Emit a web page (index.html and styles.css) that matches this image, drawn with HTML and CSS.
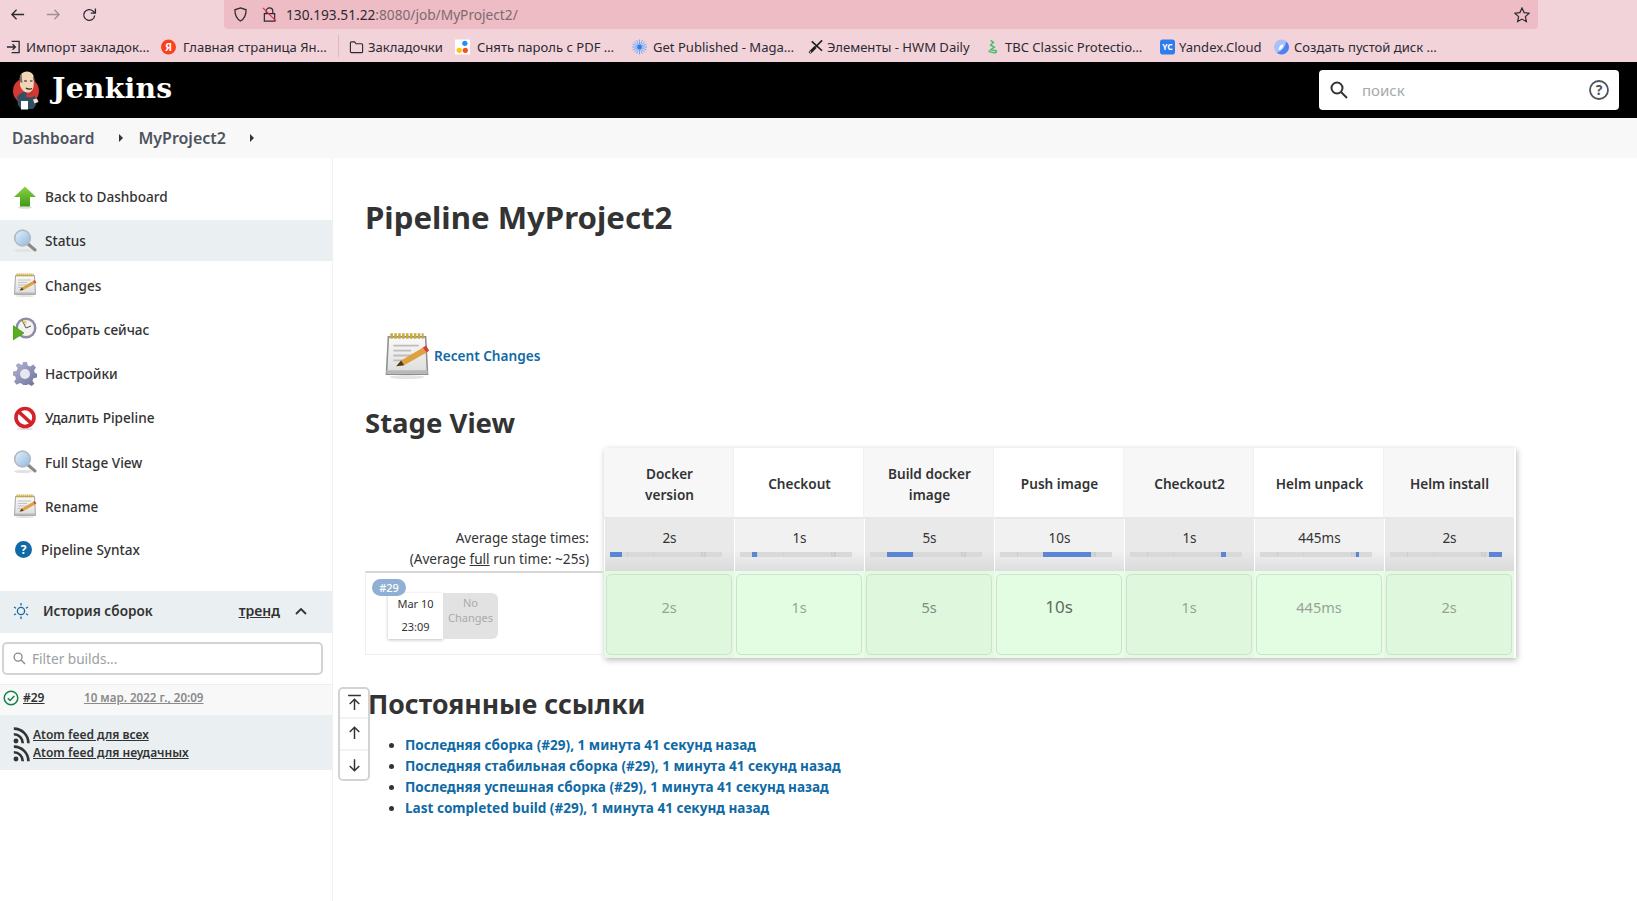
FILE: index.html
```html
<!DOCTYPE html>
<html lang="ru">
<head>
<meta charset="utf-8">
<title>MyProject2 [Jenkins]</title>
<link rel="stylesheet" href="styles.css">
</head>
<body>
<svg class="defs" width="0" height="0">
  <defs>
    <linearGradient id="lens" x1="0" y1="0" x2="1" y2="1"><stop offset="0" stop-color="#e8f2fb"/><stop offset="1" stop-color="#8fb6e0"/></linearGradient>
    <linearGradient id="green" x1="0" y1="0" x2="0" y2="1"><stop offset="0" stop-color="#8fd14a"/><stop offset="1" stop-color="#3f9a12"/></linearGradient>
    <linearGradient id="gear" x1="0" y1="0" x2="1" y2="1"><stop offset="0" stop-color="#b3b6d6"/><stop offset="1" stop-color="#6d7198"/></linearGradient>
    <linearGradient id="paper" x1="0" y1="0" x2="0" y2="1"><stop offset="0" stop-color="#fafafa"/><stop offset="1" stop-color="#dcdcdc"/></linearGradient>
    <symbol id="i-search" viewBox="0 0 24 24">
      <ellipse cx="10" cy="21.500" rx="9" ry="1.600" fill="#e2e2e2"/>
      <path d="M14.500 14.500l7.500 6.500" stroke="#8a8a8a" stroke-width="3" stroke-linecap="round"/>
      <circle cx="9.500" cy="9" r="7.800" fill="url(#lens)" stroke="#b0bbc6" stroke-width="1.700"/>
    </symbol>
    <symbol id="i-note" viewBox="0 0 24 24">
      <ellipse cx="12" cy="23" rx="9" ry="1" fill="#e4e4e4"/>
      <path d="M2.500 2.500h19l1 19H1.500z" fill="url(#paper)" stroke="#8f8f8f" stroke-width=".8"/>
      <path d="M1.500 19.500h21v2H1.500z" fill="#b8b8b8"/>
      <path d="M3.500 2h17" stroke="#c9a93a" stroke-width="2.800" stroke-dasharray="1.300 .7"/>
      <path d="M5 7h13M5 9.500h9M5 12h11M5 14.500h5" stroke="#bdbdbd" stroke-width=".9"/>
      <path d="M6.500 17.500l2.500-3L20 8l2 2.500L10.500 17z" fill="#dda23f"/>
      <path d="M20 8l2 2.500 1.300-1-1.600-2.600z" fill="#dc3a32"/>
      <path d="M6.500 17.500l2.500-3 1.500 2.500z" fill="#4a3a20"/>
    </symbol>
    <symbol id="i-up" viewBox="0 0 24 24">
      <ellipse cx="12" cy="22.500" rx="7" ry="1.300" fill="#ddd"/>
      <path d="M12 1.500L23 12h-6v9.500H7V12H1z" fill="url(#green)"/>
    </symbol>
    <symbol id="i-clock" viewBox="0 0 24 24">
      <circle cx="13" cy="11" r="10.500" fill="#8f8da6"/>
      <circle cx="13" cy="11" r="8" fill="#f4f3ef"/>
      <path d="M9 3l4 8 5-2" fill="none" stroke="#555" stroke-width="1"/>
      <path d="M9 3.500l5 .5-1.500 4z" fill="#e9cf78"/>
      <path d="M0 8.500l11 7.500-11 7z" fill="#58b01e" stroke="#3c8a10" stroke-width=".6"/>
    </symbol>
    <symbol id="i-gear" viewBox="0 0 24 24">
      <path d="M10 0h4l.7 3.600 2.500 1 3-2 2.800 2.800-2 3 1 2.500L24 11.500v4l-3.600.7-1 2.500 2 3-2.800 2.300-3-1.800-1.900.8H10l-.7-1-2.500-1-3 1.800L1 19.700l2-3-1-2.500L0 13.500v-4l3.600-.7 1-2.500-2-3L5.400 1l3 2 1-.6z" fill="url(#gear)"/>
      <circle cx="12" cy="12" r="5" fill="#e6e7f2"/>
    </symbol>
    <symbol id="i-stop" viewBox="0 0 24 24">
      <ellipse cx="12" cy="23" rx="8" ry="1" fill="#ddd"/>
      <circle cx="12" cy="11.500" r="9" fill="#fff" stroke="#d3222a" stroke-width="3.600"/>
      <path d="M5.500 5.500l13 12" stroke="#d3222a" stroke-width="3.600"/>
    </symbol>
    <symbol id="i-help" viewBox="0 0 24 24">
      <circle cx="12" cy="12" r="12" fill="#0f6aa5"/>
      <text x="12" y="18" text-anchor="middle" class="help-mark">?</text>
    </symbol>
    <symbol id="i-rss" viewBox="0 0 16 16">
      <circle cx="2.800" cy="13.200" r="2.300" fill="#333"/>
      <path d="M.8 6.800a8.400 8.400 0 0 1 8.400 8.400M.8 1.500a13.700 13.700 0 0 1 13.700 13.700" fill="none" stroke="#333" stroke-width="2.500"/>
    </symbol>
  </defs>
</svg>

<div class="chrome">
  <div class="toolbar">
    <div class="nav-btns">
      <svg class="ti" viewBox="0 0 16 16"><path d="M15 8H2M7 3L2 8l5 5" fill="none" stroke="#2b2a33" stroke-width="1.400"/></svg>
      <svg class="ti faded" viewBox="0 0 16 16"><path d="M1 8h13M9 3l5 5-5 5" fill="none" stroke="#2b2a33" stroke-width="1.400"/></svg>
      <svg class="ti" viewBox="0 0 16 16"><path d="M13.500 9a5.800 5.800 0 1 1-1.700-4.600L14 6.500M14.300 1.500v5h-5" fill="none" stroke="#2b2a33" stroke-width="1.400"/></svg>
    </div>
    <div class="urlbar">
      <svg class="ui shield" viewBox="0 0 16 16"><path d="M8 1l6 2c0 6-1.500 9.500-6 12C3.500 12.500 2 9 2 3z" fill="none" stroke="#2b2a33" stroke-width="1.300"/></svg>
      <svg class="ui lock" viewBox="0 0 16 16"><path d="M4.500 7V4.500a3.500 3.500 0 0 1 7 0V7M2.500 7h11v8h-11z" fill="none" stroke="#2b2a33" stroke-width="1.300"/><path d="M1 1l14 14" stroke="#e22850" stroke-width="1.300"/></svg>
      <span class="url"><span class="url-host">130.193.51.22</span>:8080/job/MyProject2/</span>
      <svg class="ui star" viewBox="0 0 16 16"><path d="M8 1l2.100 4.600 5 .6-3.700 3.400 1 5L8 12.100l-4.400 2.500 1-5L.9 6.200l5-.6z" fill="none" stroke="#2b2a33" stroke-width="1.200"/></svg>
    </div>
  </div>
  <div class="bookmarks">
    <div class="bm b1"><svg class="bi" viewBox="0 0 16 16"><path d="M6 2h8v12H6M1 8h9M7 5l3 3-3 3" fill="none" stroke="#2b2a33" stroke-width="1.400"/></svg><span>Импорт закладок…</span></div>
    <div class="bm b2"><svg class="bi" viewBox="0 0 16 16"><circle cx="8" cy="8" r="8" fill="#fc3f1d"/><text x="8" y="12" text-anchor="middle" class="ya">Я</text></svg><span>Главная страница Ян…</span></div>
    <div class="bm-sep"></div>
    <div class="bm b3"><svg class="bi" viewBox="0 0 16 16"><path d="M1.500 3.500a1 1 0 0 1 1-1h3.500l1.500 2h6a1 1 0 0 1 1 1v7.500a1 1 0 0 1-1 1h-11a1 1 0 0 1-1-1z" fill="none" stroke="#2b2a33" stroke-width="1.200"/></svg><span>Закладочки</span></div>
    <div class="bm b4"><svg class="bi" viewBox="0 0 16 16"><rect width="16" height="16" fill="#fff"/><circle cx="10.500" cy="4" r="2.800" fill="#1e90ff"/><circle cx="4.500" cy="11.500" r="2.800" fill="#fcc419"/><circle cx="11" cy="11.500" r="2.800" fill="#f4511e"/></svg><span>Снять пароль с PDF …</span></div>
    <div class="bm b5"><svg class="bi" viewBox="0 0 16 16"><g stroke="#6aa6f8" stroke-width="1"><path d="M8 0v16M0 8h16M2.300 2.300l11.400 11.400M13.700 2.300L2.300 13.700M4.900 .6l6.200 14.800M11.100 .6L4.900 15.400M.6 4.900l14.800 6.200M15.400 4.900L.6 11.100"/></g><circle cx="8" cy="8" r="2.500" fill="#2f7cf0"/></svg><span>Get Published - Maga…</span></div>
    <div class="bm b6"><svg class="bi" viewBox="0 0 16 16"><path d="M4 2l11 10" stroke="#1d1d1d" stroke-width="1.800"/><path d="M15 1L8 8" stroke="#1d1d1d" stroke-width="1.800"/><path d="M8 8l-5 5" stroke="#1d1d1d" stroke-width="3.200"/><circle cx="2.500" cy="13.500" r="1.200" fill="#fff" stroke="#1d1d1d"/></svg><span>Элементы - HWM Daily</span></div>
    <div class="bm b7"><svg class="bi" viewBox="0 0 16 16"><path d="M6 1l3 2-3 3 4 2-4 3 6 1c1 1-1 3-3 2s-5 0-5-2" fill="none" stroke="#3fbf6a" stroke-width="1.500"/></svg><span>TBC Classic Protectio…</span></div>
    <div class="bm b8"><svg class="bi" viewBox="0 0 16 16"><rect width="16" height="16" rx="3" fill="#2f7cf0"/><text x="8" y="11.500" text-anchor="middle" class="yc">YC</text></svg><span>Yandex.Cloud</span></div>
    <div class="bm b9"><svg class="bi" viewBox="0 0 16 16"><circle cx="8" cy="8" r="8" fill="#a9c1fb"/><path d="M8 16a8 8 0 0 0 8-8 8 8 0 0 0-3-6C12 8 9 12 3 14a8 8 0 0 0 5 2z" fill="#4f7ff0"/><path d="M5 11c0-3 2-6 5-6 0 3-2 6-5 6z" fill="#fff"/></svg><span>Создать пустой диск …</span></div>
  </div>
</div>

<header class="jk-header">
  <div class="logo">
    <svg class="logo-mark" viewBox="0 0 28 40">
      <circle cx="14" cy="21" r="13" fill="#d33833"/>
      <path d="M8 11C7 5 10 1.500 15 1.500c5 0 7.500 3.500 7 9l-.5 6c-.5 4-3 6-6 6-3.500 0-6-3-7.500-7z" fill="#f0d6b7"/>
      <path d="M8 12C7 8 8 5 10 3.500 9.500 6 10 9 10.500 13zM21 5c1.500 2 1.800 4 1.500 7l-1.500-3z" fill="#7c6a5e"/>
      <path d="M12 11h3M18 11h2.500M14 18c2 1.500 4 1.500 6 .5" stroke="#231f20" stroke-width="1.200" fill="none"/>
      <path d="M5 27c2-3 5-5 8-5l3 3 4-2 3 3 1 9-3 4H9l-3-4z" fill="#335061"/>
      <path d="M14 25l4-.5 4-1.500.5 3-4 1.500-4-.5z" fill="#d33833"/>
      <path d="M9 31h7v8.500H9z" fill="#fff"/>
      <path d="M21 29.500l4-1 1.500 3.500-4 1.500z" fill="#f4e6d6"/>
    </svg>
    <span class="logo-text">Jenkins</span>
  </div>
  <div class="search">
    <svg class="search-ic" viewBox="0 0 18 18"><circle cx="7" cy="7" r="5.500" fill="none" stroke="#333" stroke-width="2"/><path d="M11 11l6 6" stroke="#333" stroke-width="2"/></svg>
    <span class="search-ph">поиск</span>
    <svg class="search-help" viewBox="0 0 20 20"><circle cx="10" cy="10" r="9" fill="none" stroke="#4d545d" stroke-width="1.800"/><text x="10" y="14.500" text-anchor="middle" class="help-q">?</text></svg>
  </div>
</header>

<nav class="crumbs">
  <span class="crumb c1">Dashboard</span><span class="caret"></span>
  <span class="crumb c2">MyProject2</span><span class="caret"></span>
</nav>

<div class="page">
  <aside class="side">
    <div class="tasks">
      <div class="task"><svg class="task-ic"><use href="#i-up"/></svg><span>Back to Dashboard</span></div>
      <div class="task active"><svg class="task-ic"><use href="#i-search"/></svg><span>Status</span></div>
      <div class="task"><svg class="task-ic"><use href="#i-note"/></svg><span>Changes</span></div>
      <div class="task"><svg class="task-ic"><use href="#i-clock"/></svg><span>Собрать сейчас</span></div>
      <div class="task"><svg class="task-ic"><use href="#i-gear"/></svg><span>Настройки</span></div>
      <div class="task"><svg class="task-ic"><use href="#i-stop"/></svg><span>Удалить Pipeline</span></div>
      <div class="task"><svg class="task-ic"><use href="#i-search"/></svg><span>Full Stage View</span></div>
      <div class="task"><svg class="task-ic"><use href="#i-note"/></svg><span>Rename</span></div>
      <div class="task small-ic"><svg class="task-ic"><use href="#i-help"/></svg><span>Pipeline Syntax</span></div>
    </div>
    <section class="history">
      <div class="hist-head">
        <svg class="sun" viewBox="0 0 16 16"><circle cx="8" cy="8" r="3.600" fill="none" stroke="#0f6aa5" stroke-width="1.300"/><path d="M8 0v2.500M8 13.500V16M1 4l2 1.200M13 10.800l2 1.200M1 12l2-1.200M13 5.200L15 4" stroke="#0f6aa5" stroke-width="1.300"/></svg>
        <span class="hist-title">История сборок</span>
        <span class="trend">тренд</span>
        <svg class="chev" viewBox="0 0 12 8"><path d="M1 7l5-5 5 5" fill="none" stroke="#333" stroke-width="1.800"/></svg>
      </div>
      <div class="filter-wrap">
        <div class="filter">
          <svg class="filter-ic" viewBox="0 0 14 14"><circle cx="5.500" cy="5.500" r="4.300" fill="none" stroke="#8a8a8a" stroke-width="1.400"/><path d="M8.700 8.700L13 13" stroke="#8a8a8a" stroke-width="1.400"/></svg>
          <span>Filter builds...</span>
        </div>
      </div>
      <div class="build-row">
        <svg class="ok" viewBox="0 0 16 16"><circle cx="8" cy="8" r="6.800" fill="none" stroke="#138347" stroke-width="1.500"/><path d="M4.800 8.200l2.300 2.300 4.200-4.500" fill="none" stroke="#138347" stroke-width="1.500"/></svg>
        <span class="build-no">#29</span>
        <span class="build-date">10 мар. 2022 г., 20:09</span>
      </div>
      <div class="feeds">
        <div class="feed"><svg class="rss"><use href="#i-rss"/></svg><span>Atom feed для всех</span></div>
        <div class="feed"><svg class="rss"><use href="#i-rss"/></svg><span>Atom feed для неудачных</span></div>
      </div>
    </section>
  </aside>

  <main class="main">
    <h1 class="title">Pipeline MyProject2</h1>
    <div class="recent">
      <svg class="recent-ic"><use href="#i-note"/></svg>
      <span class="link">Recent Changes</span>
    </div>
    <h2 class="h2 stage-h">Stage View</h2>
    <div class="stage">
      <div class="stage-left">
        <div class="avg-label">
          <div>Average stage times:</div>
          <div>(Average <u>full</u> run time: ~25s)</div>
        </div>
        <div class="run">
          <span class="badge">#29</span>
          <div class="run-card">
            <div class="run-date"><span>Mar 10</span><span>23:09</span></div>
            <div class="run-none">No Changes</div>
          </div>
        </div>
      </div>
      <div class="stage-grid">
        <div class="th odd">Docker<br>version</div><div class="th">Checkout</div><div class="th odd">Build docker<br>image</div><div class="th">Push image</div><div class="th odd">Checkout2</div><div class="th">Helm unpack</div><div class="th odd">Helm install</div>

        <div class="avg odd"><span>2s</span><div class="bar"><i style="left:0;width:11%"></i></div></div>
        <div class="avg"><span>1s</span><div class="bar"><i style="left:11%;width:4%"></i></div></div>
        <div class="avg odd"><span>5s</span><div class="bar"><i style="left:15%;width:23%"></i></div></div>
        <div class="avg"><span>10s</span><div class="bar"><i style="left:38%;width:43.500%"></i></div></div>
        <div class="avg odd"><span>1s</span><div class="bar"><i style="left:81.500%;width:4.500%"></i></div></div>
        <div class="avg"><span>445ms</span><div class="bar"><i style="left:86%;width:2%"></i></div></div>
        <div class="avg odd"><span>2s</span><div class="bar"><i style="left:88%;width:12%"></i></div></div>

        <div class="cell odd t-1"><span>2s</span></div>
        <div class="cell t-2"><span>1s</span></div>
        <div class="cell odd t-3"><span>5s</span></div>
        <div class="cell t-4"><span>10s</span></div>
        <div class="cell odd t-2"><span>1s</span></div>
        <div class="cell t-2"><span>445ms</span></div>
        <div class="cell odd t-1"><span>2s</span></div>
      </div>
    </div>
    <h2 class="h2 perm-h">Постоянные ссылки</h2>
    <ul class="perm">
      <li><span class="link">Последняя сборка (#29), 1 минута 41 секунд назад</span></li>
      <li><span class="link">Последняя стабильная сборка (#29), 1 минута 41 секунд назад</span></li>
      <li><span class="link">Последняя успешная сборка (#29), 1 минута 41 секунд назад</span></li>
      <li><span class="link">Last completed build (#29), 1 минута 41 секунд назад</span></li>
    </ul>
    <div class="scroller">
      <div class="sc"><svg viewBox="0 0 16 16"><path d="M2 1.500h12M8 15V5M3.500 9.500L8 5l4.500 4.500" fill="none" stroke="#333" stroke-width="1.400"/></svg></div>
      <div class="sc sc-mid"><svg viewBox="0 0 16 16"><path d="M8 14V3M3.500 7.500L8 3l4.500 4.500" fill="none" stroke="#333" stroke-width="1.400"/></svg></div>
      <div class="sc"><svg viewBox="0 0 16 16"><path d="M8 2v11M3.500 8.500L8 13l4.500-4.500" fill="none" stroke="#333" stroke-width="1.400"/></svg></div>
    </div>
  </main>
</div>
</body>
</html>
```
FILE: styles.css
```css
* { box-sizing: border-box; }
html, body { margin: 0; padding: 0; height: 100%; overflow: hidden; }
body { font-family: "Noto Sans", "Open Sans", sans-serif; color: #333; background: #fff; display: flex; flex-direction: column; height: 901px; }
.defs { position: absolute; }

/* browser chrome */
.chrome { background: #f2d3d9; height: 62px; flex: none; }
.toolbar { display: flex; height: 29px; }
.nav-btns { width: 224px; display: flex; align-items: center; gap: 21px; padding-left: 10px; padding-bottom: 1px; }
.ti { width: 15px; height: 15px; flex: none; }
.faded { opacity: .4; }
.urlbar { width: 1314px; margin-left: 0; background: #edbcc4; border-radius: 0 0 4px 4px; display: flex; align-items: center; padding-left: 9px; padding-right: 8px; }
.ui { width: 15px; height: 15px; flex: none; }
.lock { margin-left: 14px; }
.url { margin-left: 9px; font-family: "Noto Sans", sans-serif; font-size: 13.700px; color: #7e6a70; padding-bottom: 1px; }
.url-host { color: #2b2a33; }
.star { margin-left: auto; width: 16px; height: 16px; }
.bookmarks { height: 33px; display: grid; grid-template-columns: 155px 177px 11px 106px 177px 176px 177px 175px 114px auto; align-items: center; padding-left: 6px; font-size: 13.050px; color: #2b2a33; }
.bm { display: flex; align-items: center; white-space: nowrap; gap: 5px; overflow: hidden; padding-top: 2px; }
.b1 { font-size: 13.300px; }
.b2, .b4 { gap: 7px; }
.b5 { gap: 6px; }
.b3, .b6, .b8 { gap: 4px; }
.bm-sep { width: 1px; height: 22px; background: #d7bcc2; }
.bi { width: 15px; height: 16px; flex: none; }
.ya { font: 700 11px "Noto Sans", sans-serif; fill: #fff; }
.yc { font: 700 9px "Noto Sans", sans-serif; fill: #fff; }

/* jenkins header */
.jk-header { height: 56px; background: #000; flex: none; display: flex; align-items: center; justify-content: space-between; padding: 0 18px 0 12px; }
.logo { display: flex; align-items: center; gap: 12px; }
.logo-mark { width: 28px; height: 40px; }
.logo-text { font: 700 28.200px "DejaVu Serif", serif; color: #fff; letter-spacing: .3px; margin-top: -4px; }
.search { width: 300px; height: 40px; background: #fff; border-radius: 4px; display: flex; align-items: center; padding: 0 10px 0 11px; }
.search-ic { width: 18px; height: 18px; flex: none; }
.search-ph { margin-left: 14px; font-size: 15px; color: #a5a9ad; }
.search-help { margin-left: auto; width: 20px; height: 20px; }
.help-q { font: 700 14px "Noto Sans", sans-serif; fill: #4d545d; }

/* breadcrumb */
.crumbs { height: 40px; background: #f8f8f8; flex: none; display: flex; align-items: center; padding-left: 12px; font-size: 15.500px; font-weight: 600; color: #4d545d; }
.c2 { font-size: 16px; }
.caret { width: 0; height: 0; border: 4px solid transparent; border-left: 4px solid #333; border-right: 0; }
.c1 + .caret { margin-left: 25px; margin-right: 15px; }
.c2 + .caret { margin-left: 24px; }

/* page */
.page { flex: 1; display: flex; min-height: 0; }
.side { width: 333px; flex: none; border-right: 1px solid #f0f0f0; padding-top: 18px; }
.tasks { display: flex; flex-direction: column; gap: 3.250px; }
.task { height: 41px; display: flex; align-items: center; gap: 8px; padding-left: 13px; font-size: 13.600px; font-weight: 500; color: #333; }
.task.active { background: #eaeff2; }
.task-ic { width: 24px; height: 24px; flex: none; }
.small-ic { padding-left: 15px; gap: 9px; padding-bottom: 2px; }
.small-ic .task-ic { width: 17px; height: 17px; }

.history { margin-top: 20px; }
.hist-head { height: 42px; background: #eaeff2; display: flex; align-items: center; padding-left: 13px; padding-bottom: 3px; font-weight: 600; font-size: 13.600px; }
.sun { width: 16px; height: 16px; flex: none; }
.hist-title { margin-left: 14px; }
.trend { margin-left: auto; font-size: 14px; text-decoration: underline; }
.chev { width: 12px; height: 8px; margin: 0 25px 0 15px; }
.filter-wrap { padding: 9px 9px 9px 2px; }
.filter { height: 33px; border: 2px solid #d3d3d3; border-radius: 5px; display: flex; align-items: center; gap: 6px; padding-left: 9px; font-size: 13.600px; color: #9a9fa3; background: #fff; }
.filter-ic { width: 13px; height: 13px; flex: none; }
.build-row { height: 31px; background: #f8f8f8; border-top: 1px solid #eee; display: flex; align-items: center; padding-left: 3px; padding-bottom: 5px; font-size: 12px; font-weight: 600; }
.ok { width: 16px; height: 16px; flex: none; }
.build-no { margin-left: 4px; text-decoration: underline; width: 61px; }
.build-date { color: #8a8a8a; text-decoration: underline; font-size: 11.600px; }
.feeds { height: 55px; background: #eaeff2; padding: 10px 0 0 13px; font-size: 12px; font-weight: 600; }
.feed { display: flex; align-items: center; gap: 3px; height: 18px; }
.feed span { text-decoration: underline; }
.rss { width: 17px; height: 17px; flex: none; margin-top: 2px; }

/* main */
.main { flex: 1; position: relative; padding-left: 32px; min-width: 0; }
.title { margin: 37px 0 0; font-size: 31.200px; font-weight: 700; line-height: 44px; color: #333; }
.recent { display: flex; align-items: center; margin: 93px 0 0 18px; height: 47px; gap: 3px; }
.recent-ic { width: 48px; height: 47px; flex: none; }
.link { color: #0f6aa5; font-weight: 700; font-size: 13.550px; }
.recent .link { font-size: 13.600px; font-weight: 600; }
.h2 { margin: 0; font-weight: 700; font-size: 26.600px; line-height: 36px; color: #333; }
.stage-h { margin-top: 26px; font-size: 27.500px; }
.stage { display: flex; margin-top: 7px; }
.stage-left { width: 238px; flex: none; display: flex; flex-direction: column; }
.avg-label { margin-top: 79px; height: 44px; padding-top: 0; text-align: right; padding-right: 14px; font-size: 13.600px; line-height: 21px; }
.run { position: relative; height: 84px; margin-top: 0; border: 1px solid #eee; border-top: 2px solid #d8d8d8; border-right: 0; padding: 20px 0 0 22px; }
.badge { position: absolute; left: 6px; top: 6px; width: 34px; height: 17px; border-radius: 9px; background: #8fb0d4; color: #fff; font-size: 11px; font-weight: 500; text-align: center; line-height: 17px; }
.run-card { display: flex; width: 110px; height: 46px; }
.run-date { width: 55px; background: #fff; box-shadow: 0 1px 3px rgba(0,0,0,.25); display: flex; flex-direction: column; justify-content: space-between; align-items: center; padding: 2px 0 4px; font-size: 11px; color: #333; line-height: 17px; }
.run-none { width: 55px; background: #e2e2e2; border-radius: 0 6px 6px 0; color: #aaa; font-size: 11px; line-height: 15px; text-align: center; padding-top: 2px; }
.stage-grid { display: grid; grid-template-columns: repeat(7, 130px); grid-template-rows: 71px 52px 87px; width: 912px; background: #fff; box-shadow: 1px 2px 6px rgba(0,0,0,.28); margin-left: 1px; height: 210px; }
.th { display: flex; align-items: center; justify-content: center; text-align: center; font-size: 13.600px; font-weight: 600; line-height: 21px; padding: 2px 6px 0 8px; border-bottom: 2px solid #e8e8e8; border-right: 1px solid #f2f2f2; background: #fff; color: #333; }
.th.odd { background: #f7f7f7; }
.avg { background: linear-gradient(#f1f1f1 60%, #dedede); border-left: 1px solid #fff; padding: 9px 6px 0; text-align: center; font-size: 13.500px; line-height: 20px; position: relative; }
.avg.odd { background: linear-gradient(#e9e9e9 60%, #dadada); }
.bar { position: relative; height: 5px; margin-top: 4px; margin-left: -1px; margin-right: 6px; background: linear-gradient(90deg, #d9d9d9 15%, #c8c8c8 15.500%, #d9d9d9 16%, #d9d9d9 38%, #c8c8c8 38.500%, #d9d9d9 39%, #d9d9d9 81%, #c8c8c8 82%, #d9d9d9 83%, #c8c8c8 85%, #d9d9d9 86%); }
.bar i { position: absolute; top: 0; bottom: 0; background: #5b86d6; }
.cell { background: #e9fce7; padding: 3px 2px; }
.cell.odd { background: #e4f8e2; }
.cell span { display: flex; align-items: center; justify-content: center; height: 81px; padding-bottom: 16px; border-radius: 5px; border: 1px solid #cbe3ca; background: #e3fde2; color: #9aa79a; font-size: 14.500px; }
.cell.odd span { background: #dff7dd; }
.t-1 span, .t-2 span { color: #96a396; }
.t-3 span { color: #7f8c7f; }
.t-4 span { color: #5f6c5f; font-size: 17px; }
.perm-h { margin-top: 28px; margin-left: 3px; }
.perm { margin: 13px 0 0; padding-left: 40px; font-size: 13.550px; line-height: 21px; }
.perm li::marker { color: #333; }
.scroller { position: absolute; left: 5px; top: 529px; width: 32px; height: 94px; border: 2px solid #d3d3d3; border-radius: 5px; background: #fff; display: flex; flex-direction: column; }
.sc { flex: 1; display: flex; align-items: center; justify-content: center; border-bottom: 2px solid #f2f2f2; }
.sc:last-child { border-bottom: 0; }
.sc-mid { padding-bottom: 3px; }
.sc svg { width: 17px; height: 17px; }
.help-mark { font: 700 17px "Noto Sans", sans-serif; fill: #fff; }
```
